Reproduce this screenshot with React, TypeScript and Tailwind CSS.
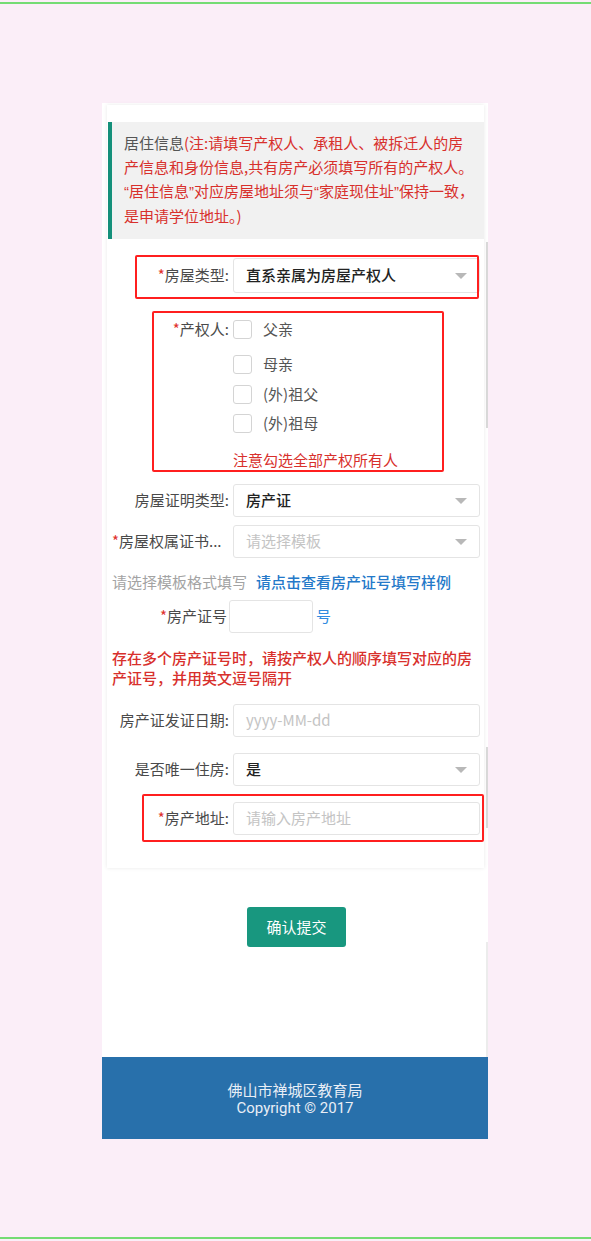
import { ReactNode } from "react";

const CJK = "font-['Noto_Sans_CJK_SC','Noto_Sans',sans-serif]";

const Caret = () => (
  <span className="ml-auto mr-[12px] h-0 w-0 border-x-[6px] border-t-[6px] border-x-transparent border-t-[#b8b8b8]" />
);

const Q = ({ children }: { children: ReactNode }) => (
  <span className="font-['Liberation_Sans',sans-serif]">{children}</span>
);

const Label = ({ children, required }: { children: ReactNode; required?: boolean }) => (
  <div className="w-[117px] shrink-0 text-right text-[15px] text-[#4a4a4a]">
    {required && <span className="text-[#e0302c]">*</span>}
    {children}
  </div>
);

const Field = ({
  value,
  placeholder,
  select,
  tall,
}: {
  value?: string;
  placeholder?: string;
  select?: boolean;
  tall?: boolean;
}) => (
  <div
    className={`ml-[4px] flex w-[247px] items-center rounded-[3px] border border-[#e4e4e4] bg-white pl-[12px] text-[15px] ${
      tall ? "h-[35px]" : "h-[33px]"
    }`}
  >
    {value ? (
      <span className="font-medium text-[#222]">{value}</span>
    ) : (
      <span className="text-[#c4c4c4]">{placeholder}</span>
    )}
    {select && <Caret />}
  </div>
);

const Check = ({ label, className }: { label: string; className?: string }) => (
  <div className={`flex h-[20px] items-center ${className ?? ""}`}>
    <span className="h-[19px] w-[19px] rounded-[3px] border border-[#d4d4d4] bg-white" />
    <span className="ml-[11px] text-[15px] text-[#555]">{label}</span>
  </div>
);

export default function App() {
  return (
    <div className={`flex h-[1241px] w-[591px] flex-col bg-[#fbeef8] ${CJK}`}>
      <div className="mt-[2px] h-[2px] bg-[#74dc74]" />

      <div className="relative ml-[102px] mt-[99px] w-[386px] bg-white">
        {/* faint scrollbars */}
        <div className="absolute left-[384px] top-[139px] h-[186px] w-[2px] bg-[#dadada]" />
        <div className="absolute left-[384px] top-[644px] h-[81px] w-[2px] bg-[#dadada]" />
        <div className="absolute left-[384px] top-[839px] h-[115px] w-[2px] bg-[#ececec]" />

        <div className="relative ml-[5px] mr-[4px] mt-[2px] pb-[33px] pt-[17px] shadow-[0_0_4px_rgba(0,0,0,0.09)]">
          {/* notice */}
          <div className="ml-[1px] border-l-4 border-[#14907a] bg-[#f1f1f1] pb-[11px] pl-[12px] pt-[9px] text-[15px] leading-[24px] text-[#d8302c] whitespace-nowrap">
            <div>
              <span className="text-[#555]">居住信息</span>(注:请填写产权人、承租人、被拆迁人的房
            </div>
            <div>产信息和身份信息,共有房产必须填写所有的产权人。</div>
            <div>
              <Q>“</Q>居住信息<Q>”</Q>对应房屋地址须与<Q>“</Q>家庭现住址<Q>”</Q>保持一致，
            </div>
            <div>是申请学位地址。)</div>
          </div>

          <div className="pl-[5px]">
            {/* 房屋类型 */}
            <div className="mt-[19px] flex items-center">
              <Label required>房屋类型:</Label>
              <Field value="直系亲属为房屋产权人" select tall />
            </div>

            {/* 产权人 */}
            <div className="mt-[26px] flex items-start">
              <div className="w-[117px] shrink-0 text-right text-[15px] leading-[20px] text-[#4a4a4a]">
                <span className="text-[#e0302c]">*</span>产权人:
              </div>
              <div className="ml-[4px] flex flex-col">
                <Check label="父亲" />
                <Check label="母亲" className="mt-[15px]" />
                <Check label="(外)祖父" className="mt-[10px]" />
                <Check label="(外)祖母" className="mt-[9px]" />
                <div className="mt-[17px] text-[15px] leading-[20px] text-[#d8302c]">注意勾选全部产权所有人</div>
              </div>
            </div>

            {/* 房屋证明类型 */}
            <div className="mt-[14px] flex items-center">
              <Label>房屋证明类型:</Label>
              <Field value="房产证" select />
            </div>

            {/* 房屋权属证书 */}
            <div className="mt-[8px] flex items-center">
              <div className="w-[117px] shrink-0 text-[15px] text-[#4a4a4a]">
                <span className="text-[#e0302c]">*</span>房屋权属证书...
              </div>
              <Field placeholder="请选择模板" select />
            </div>

            <div className="mt-[14px] flex text-[15px] leading-[20px]">
              <span className="text-[#a3a3a3]">请选择模板格式填写</span>
              <span className="ml-[9px] font-medium text-[#2479c9]">请点击查看房产证号填写样例</span>
            </div>

            {/* 房产证号 */}
            <div className="mt-[8px] flex items-center">
              <div className="w-[115px] shrink-0 text-right text-[15px] text-[#4a4a4a]">
                <span className="text-[#e0302c]">*</span>房产证号
              </div>
              <div className="ml-[2px] h-[33px] w-[84px] rounded-[3px] border border-[#e4e4e4] bg-white" />
              <span className="ml-[3px] text-[15px] text-[#2f8be0]">号</span>
            </div>

            <div className="mt-[15px] text-[15px] font-medium leading-[20px] text-[#d8302c] whitespace-nowrap">
              <div>存在多个房产证号时，请按产权人的顺序填写对应的房</div>
              <div>产证号，并用英文逗号隔开</div>
            </div>

            {/* 发证日期 */}
            <div className="mt-[16px] flex items-center">
              <Label>房产证发证日期:</Label>
              <Field placeholder="yyyy-MM-dd" />
            </div>

            {/* 唯一住房 */}
            <div className="mt-[16px] flex items-center">
              <Label>是否唯一住房:</Label>
              <Field value="是" select />
            </div>

            {/* 房产地址 */}
            <div className="mt-[16px] flex items-center">
              <Label required>房产地址:</Label>
              <Field placeholder="请输入房产地址" />
            </div>
          </div>

          {/* annotation outlines */}
          <div className="absolute left-[28px] top-[150px] h-[44px] w-[344px] rounded-[2px] border-2 border-[#ff1f1f]" />
          <div className="absolute left-[45px] top-[206px] h-[161px] w-[292px] rounded-[2px] border-2 border-[#ff1f1f]" />
          <div className="absolute left-[35px] top-[689px] h-[48px] w-[342px] rounded-[2px] border-2 border-[#ff1f1f]" />
        </div>

        <div className="flex justify-center pb-[110px] pt-[39px]">
          <button className="ml-[3px] h-[40px] w-[99px] rounded-[3px] bg-[#18977f] text-[15px] text-white">
            确认提交
          </button>
        </div>

        <footer className="h-[82px] bg-[#2870ab] pt-[24px] text-center text-[15px] leading-[18px] text-[#e8eef6]">
          <div>佛山市禅城区教育局</div>
          <div className="font-['Roboto',sans-serif]">Copyright © 2017</div>
        </footer>
      </div>

      <div className="mb-[2px] mt-auto h-[2px] bg-[#74dc74]" />
    </div>
  );
}
